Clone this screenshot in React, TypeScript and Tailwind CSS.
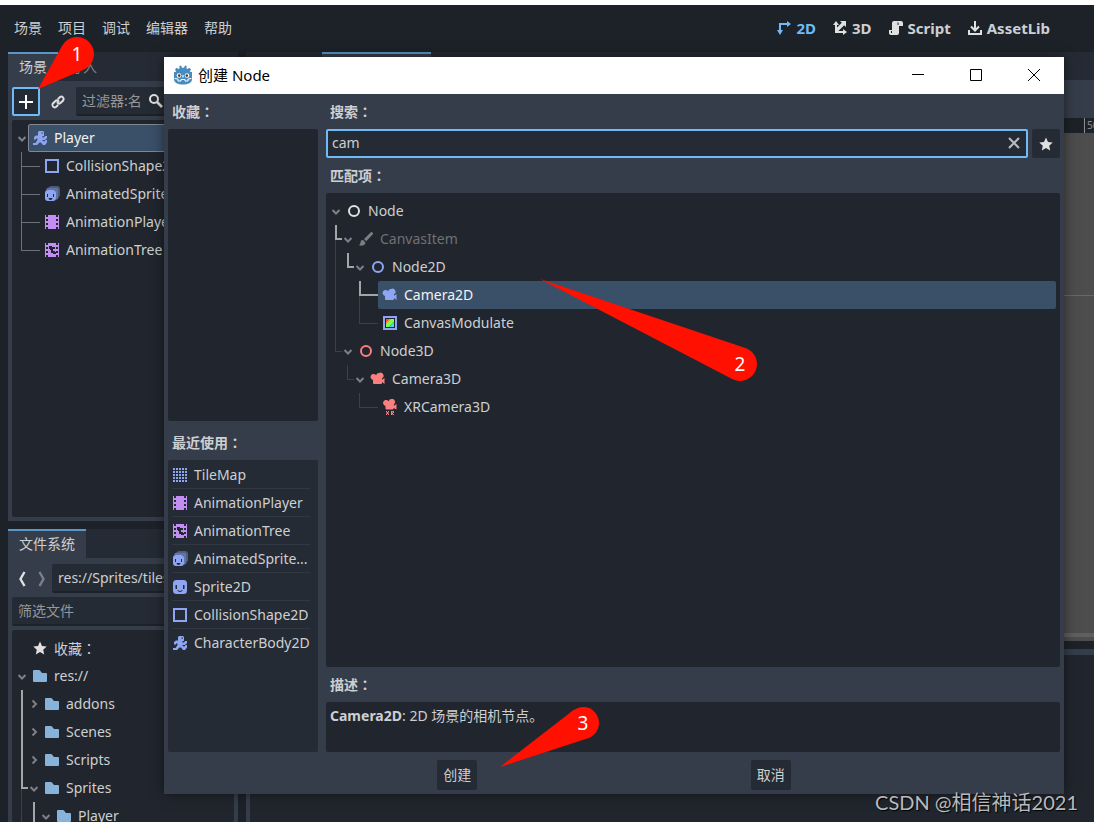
import type { ReactNode } from "react";
import clsx from "clsx";

type IconName =
  | "node"
  | "node2d"
  | "node3d"
  | "brush"
  | "camera2d"
  | "camera3d"
  | "xrcamera"
  | "modulate"
  | "tilemap"
  | "animPlayer"
  | "animTree"
  | "animSprite"
  | "sprite"
  | "collision"
  | "body"
  | "folder"
  | "star"
  | "plus"
  | "link"
  | "search"
  | "back"
  | "forward"
  | "clear"
  | "view2d"
  | "view3d"
  | "script"
  | "assetlib"
  | "arrowDown"
  | "arrowRight";

const BLUE = "#8da5f3";
const RED = "#fc7f7f";
const PURPLE = "#c38ef1";
const LIGHT = "#e0e0e0";

const CAMERA =
  "M9 2a3 3 0 0 0-2.900 2.300 3 3 0 1 0-3.100 4.600V12a1 1 0 0 0 1 1h7a1 1 0 0 0 1-1v-1l2.500 2V7l-2.500 1.700V7.300A3 3 0 0 0 9 2z";
const FILM =
  "M1 1v14h1v-2h2v2h8v-2h2v2h1V1h-1v2h-2V1H4v2H2V1zm1 4h2v2H2zm10 0h2v2h-2zM2 9h2v2H2zm10 0h2v2h-2z";

const icons: Record<IconName, ReactNode> = {
  node: <circle cx="8" cy="8" r="5" fill="none" stroke={LIGHT} strokeWidth="2" />,
  node2d: <circle cx="8" cy="8" r="5" fill="none" stroke={BLUE} strokeWidth="2" />,
  node3d: <circle cx="8" cy="8" r="5" fill="none" stroke={RED} strokeWidth="2" />,
  brush: (
    <path
      fill="#7b7d81"
      d="M14.600 1.400a1.400 1.400 0 0 0-2 0L6 8l2.200 2.200 6.400-6.800a1.400 1.400 0 0 0 0-2zM5 9a2.300 2.300 0 0 0-2.500 2.200c-.1 1.300-.8 2.300-1.500 3 2 .8 5 .6 6-1.200a2.300 2.300 0 0 0 .3-1.700z"
    />
  ),
  camera2d: <path fill={BLUE} d={CAMERA} />,
  camera3d: <path fill={RED} d={CAMERA} />,
  xrcamera: (
    <g fill={RED}>
      <path d="M9.500 0a3 3 0 0 0-2.900 2.300 3 3 0 1 0-3.100 4.600V9.500a1 1 0 0 0 1 1h6a1 1 0 0 0 1-1V9l3 1.500V5l-2.600 1.700V5.300A3 3 0 0 0 9.500 0z" />
      <path d="M4 12h1v1h1v-1h1v1.500H6v1h1V16H6v-1H5v1H4v-1.500h1v-1H4zM9 12h3v2h-1v1h1v1h-1l-1-1v1H9zm1 .8v.8h1v-.8z" />
    </g>
  ),
  modulate: (
    <>
      <path fill={BLUE} d="M1 1h14v14H1z" />
      <path fill="#21262e" d="M3 3h10v10H3z" />
      <path fill="#ff4545" d="M4 4h5L4 9z" />
      <path fill="#ffe345" d="M8 4h1L4 9V8z" />
      <path fill="#80ff45" d="M9 4h3v3l-5 5H4V9z" />
      <path fill="#45d7ff" d="M12 7v5H7z" />
    </>
  ),
  tilemap: (
    <path
      fill={BLUE}
      d="M1 1h2v2H1zm3 0h2v2H4zm3 0h2v2H7zm3 0h2v2h-2zm3 0h2v2h-2zM1 4h2v2H1zm3 0h2v2H4zm3 0h2v2H7zm3 0h2v2h-2zm3 0h2v2h-2zM1 7h2v2H1zm3 0h2v2H4zm3 0h2v2H7zm3 0h2v2h-2zm3 0h2v2h-2zM1 10h2v2H1zm3 0h2v2H4zm3 0h2v2H7zm3 0h2v2h-2zm3 0h2v2h-2zM1 13h2v2H1zm3 0h2v2H4zm3 0h2v2H7zm3 0h2v2h-2zm3 0h2v2h-2z"
    />
  ),
  animPlayer: <path fill={PURPLE} d={FILM} />,
  animTree: (
    <>
      <path fill={PURPLE} d={FILM} />
      <path fill="#21262e" d="M5 4h3v1h3v2H9v2h2v1h1v2h-3v-1H7V8H6V7H5z" />
    </>
  ),
  animSprite: (
    <>
      <path fill={BLUE} opacity=".4" d="M7 0h6a3 3 0 0 1 3 3v6a3 3 0 0 1-1.500 2.600V4A2.500 2.500 0 0 0 12 1.500H4.500A3 3 0 0 1 7 0z" />
      <path fill={BLUE} opacity=".6" d="M5 1.500h7A2.500 2.500 0 0 1 14.500 4v7A3 3 0 0 1 12 13.800V7a3 3 0 0 0-3-3H2A3 3 0 0 1 5 1.500z" />
      <rect x="1" y="4" width="11" height="11" rx="3" fill={BLUE} />
      <path fill="#252b34" d="M3 8h1v3H3zm6 0h1v3H9zM4.500 12h4a2 2 0 0 1-4 0z" />
    </>
  ),
  sprite: (
    <>
      <rect x="1" y="1" width="14" height="14" rx="3.500" fill={BLUE} />
      <path fill="#252b34" d="M3.500 6H5v4H3.500zM11 6h1.500v4H11z" />
      <path fill="none" stroke="#252b34" d="M5.500 11.500Q8 13.700 10.500 11.500" />
    </>
  ),
  collision: <path fill="none" stroke={BLUE} strokeWidth="2" d="M2 2h12v12H2z" />,
  body: (
    <path
      fill={BLUE}
      d="M7 1h4l1 1v4h-1.500v1.500H12L13 6h2v2l-2 2h-2.500v1l2 .5 1-1.500H15v2.500L13 15h-2l-2-2.500H7.500L5 15H1v-2h2.500l2-3V8.500H4v1H2V7l2-1.500h2V2zm2.500 1.500v1.300h1.300V2.500z"
    />
  ),
  folder: (
    <path fill="#87b3da" d="M2 2a1 1 0 0 0-1 1v10a1 1 0 0 0 1 1h12a1 1 0 0 0 1-1V6a1 1 0 0 0-1-1h-4L8 2.600A1.500 1.500 0 0 0 7 2z" />
  ),
  star: (
    <path fill={LIGHT} d="M8 1.500 6 6 1.300 6.500 4.800 9.700 3.800 14.500 8 12l4.200 2.500-1-4.800 3.500-3.200L10 6z" />
  ),
  plus: <path fill="#fff" d="M7 1h2v6h6v2H9v6H7V9H1V7h6z" />,
  link: (
    <g fill="none" stroke={LIGHT} strokeWidth="2" strokeLinecap="round">
      <path d="M8.300 4.700 10 3a2.400 2.400 0 0 1 3.300 3.300l-2.500 2.500a2.400 2.400 0 0 1-3.300 0" />
      <path d="M7.700 11.300 6 13a2.400 2.400 0 0 1-3.300-3.300l2.500-2.500a2.400 2.400 0 0 1 3.300 0" />
    </g>
  ),
  search: (
    <g fill="none" stroke={LIGHT} strokeWidth="2">
      <circle cx="6" cy="6" r="4" />
      <path strokeWidth="2.500" d="m9 9 5 5" />
    </g>
  ),
  back: <path fill="none" stroke={LIGHT} strokeWidth="2.400" d="M10.500 1 6.500 8l4 7" />,
  forward: <path fill="none" stroke="#7c8188" strokeWidth="2.400" d="m5.500 1 4 7-4 7" />,
  clear: <path fill="none" stroke="#b9bcc0" strokeWidth="2" d="m3 3 10 10M13 3 3 13" />,
  view2d: (
    <path fill="#70bafa" d="M11 1v2H3v7H1l3 5 3-5H5V5h6v2l4-3z" />
  ),
  view3d: (
    <path
      fill={LIGHT}
      d="M4 1 1 5h2v8h8v2l4-3-4-3v2H6.400l5.800-5.800L14 7V1H8l1.800 1.800L5 7.600V5h2z"
    />
  ),
  script: (
    <path fill={LIGHT} d="M6 1a2 2 0 0 0-2 2v7H1v2.500a2 2 0 0 0 2 2.500h6a2 2 0 0 0 2-2V6h4V3a2 2 0 0 0-2-2zm3.500 1.500h1V5h-1zM4 11v2H3v-2z" />
  ),
  assetlib: (
    <path
      fill="none"
      stroke={LIGHT}
      strokeWidth="2"
      d="M8 1v9M4 6.500l4 4 4-4M2 10v4h12v-4"
    />
  ),
  arrowDown: <path fill="none" stroke="#7c8188" strokeWidth="2" d="m4.500 7 3.500 3.500L11.500 7" />,
  arrowRight: <path fill="none" stroke="#7c8188" strokeWidth="2" d="M6.500 4.500 10 8l-3.500 3.500" />,
};

function Icon({ name, className = "size-4" }: { name: IconName; className?: string }) {
  return (
    <svg viewBox="0 0 16 16" className={clsx("shrink-0", className)} aria-hidden="true">
      {icons[name]}
    </svg>
  );
}

// Upper and lower half of one 12px guide column in a tree row
const upperGuides: Record<string, string> = {
  L: "border-l-2 border-b-2 border-[#a3a5a8]",
  V: "border-l-2 border-[#a3a5a8]",
  l: "border-l border-b border-[#3c4149]",
  v: "border-l border-[#3c4149]",
  s: "border-l border-b border-[#6c7078]",
  ".": "",
};

const lowerGuides: Record<string, string> = {
  V: "border-l-2 border-[#a3a5a8]",
  v: "border-l border-[#3c4149]",
  s: "border-l border-[#6c7078]",
  ".": "",
};

interface TreeItem {
  label: ReactNode;
  icon: IconName;
  guides?: string[]; // two letters each: upper half, lower half
  arrow?: "arrowDown" | "arrowRight";
  lead?: "L" | "l" | "s";
  selected?: boolean;
  outlined?: boolean;
  dim?: boolean;
}

const leadLines = {
  L: "border-b-2 border-[#a3a5a8]",
  l: "border-b border-[#3c4149]",
  s: "border-b border-[#6c7078]",
};

function Tree({ items }: { items: TreeItem[] }) {
  return (
    <ul>
      {items.map((item, i) => (
        <li key={i} className="flex h-7">
          {item.guides?.map((g, j) => (
            <span key={j} className="flex w-3 shrink-0 flex-col pl-[5px]">
              <span className={clsx("h-[15px]", upperGuides[g[0]])} />
              <span className={clsx("flex-1", lowerGuides[g[1]])} />
            </span>
          ))}
          <span className="flex h-7 w-3 shrink-0 items-center justify-center">
            {item.arrow && <Icon name={item.arrow} />}
            {item.lead && (
              <span className={clsx("h-[15px] w-3 self-start", leadLines[item.lead])} />
            )}
          </span>
          <span
            className={clsx(
              "flex flex-1 items-center gap-1.5 rounded-xs whitespace-nowrap",
              item.selected && "bg-[#3a5068] text-[#f2f2f2]",
              item.outlined ? "border border-[#7f8893] px-[3px]" : "px-1",
              item.dim && "text-[#6e7175]",
            )}
          >
            <Icon name={item.icon} />
            {item.label}
          </span>
        </li>
      ))}
    </ul>
  );
}

function Colon() {
  return <span className="font-['Noto_Sans_CJK_TC',sans-serif]">：</span>;
}

const sceneTree: TreeItem[] = [
  { label: "Player", icon: "body", arrow: "arrowDown", selected: true, outlined: true },
  { label: "CollisionShape2D", icon: "collision", guides: ["ss"], lead: "s" },
  { label: "AnimatedSprite2D", icon: "animSprite", guides: ["ss"], lead: "s" },
  { label: "AnimationPlayer", icon: "animPlayer", guides: ["ss"], lead: "s" },
  { label: "AnimationTree", icon: "animTree", guides: ["s."], lead: "s" },
];

const fileTree: TreeItem[] = [
  { label: <span>收藏<Colon /></span>, icon: "star" },
  { label: "res://", icon: "folder", arrow: "arrowDown" },
  { label: "addons", icon: "folder", guides: ["VV"], arrow: "arrowRight" },
  { label: "Scenes", icon: "folder", guides: ["VV"], arrow: "arrowRight" },
  { label: "Scripts", icon: "folder", guides: ["VV"], arrow: "arrowRight" },
  { label: "Sprites", icon: "folder", guides: ["Lv"], arrow: "arrowDown" },
  { label: "Player", icon: "folder", guides: ["vv", "VV"], arrow: "arrowDown" },
];

const matches: TreeItem[] = [
  { label: "Node", icon: "node", arrow: "arrowDown" },
  { label: "CanvasItem", icon: "brush", guides: ["Lv"], arrow: "arrowDown", dim: true },
  { label: "Node2D", icon: "node2d", guides: ["vv", "L."], arrow: "arrowDown" },
  { label: "Camera2D", icon: "camera2d", guides: ["vv", "..", "Lv"], lead: "L", selected: true },
  { label: "CanvasModulate", icon: "modulate", guides: ["vv", "..", "l."], lead: "l" },
  { label: "Node3D", icon: "node3d", guides: ["l."], arrow: "arrowDown" },
  { label: "Camera3D", icon: "camera3d", guides: ["..", "l."], arrow: "arrowDown" },
  { label: "XRCamera3D", icon: "xrcamera", guides: ["..", "..", "l."], lead: "l" },
];

const recent: { label: string; icon: IconName }[] = [
  { label: "TileMap", icon: "tilemap" },
  { label: "AnimationPlayer", icon: "animPlayer" },
  { label: "AnimationTree", icon: "animTree" },
  { label: "AnimatedSprite...", icon: "animSprite" },
  { label: "Sprite2D", icon: "sprite" },
  { label: "CollisionShape2D", icon: "collision" },
  { label: "CharacterBody2D", icon: "body" },
];

const workspaces: { label: string; icon: IconName; active?: boolean }[] = [
  { label: "2D", icon: "view2d", active: true },
  { label: "3D", icon: "view3d" },
  { label: "Script", icon: "script" },
  { label: "AssetLib", icon: "assetlib" },
];

function MenuBar() {
  return (
    <header className="flex h-[47px] shrink-0 items-center justify-between pr-11 pb-0.5 pl-3.5">
      <nav className="flex gap-4">
        {["场景", "项目", "调试", "编辑器", "帮助"].map((m) => (
          <button key={m}>{m}</button>
        ))}
      </nav>
      <div className="flex gap-4 text-[15px] font-bold">
        {workspaces.map((w) => (
          <button
            key={w.label}
            className={clsx("flex items-center gap-1", w.active && "text-[#70bafa]")}
          >
            <Icon name={w.icon} />
            {w.label}
          </button>
        ))}
      </div>
    </header>
  );
}

function SceneDock() {
  return (
    <section className="flex h-[469px] shrink-0 flex-col bg-[#363d4a]">
      <div className="flex h-[29px] shrink-0 bg-[#252b34]">
        <button className="border-t-2 border-[#5b96c9] bg-[#363d4a] px-[11px] pb-0.5">场景</button>
        <button className="px-[11px] text-[#7c8189]">导入</button>
      </div>
      <div className="flex flex-1 flex-col gap-1 p-1">
        <div className="flex h-[31px] items-end gap-1">
          <button
            aria-label="添加节点"
            className="flex h-[29px] w-7 items-center justify-center rounded-xs border-2 border-[#70bafa] bg-[#252b34]"
          >
            <Icon name="plus" />
          </button>
          <button aria-label="实例化场景" className="flex h-[29px] w-7 items-center justify-center">
            <Icon name="link" />
          </button>
          <label className="flex h-[29px] w-[94px] items-center rounded-xs border-b-2 border-[#1d2229] bg-[#252b34] px-1.5">
            <input
              aria-label="过滤器"
              placeholder="过滤器:名"
              className="w-[66px] outline-none placeholder:text-[#94979c]"
            />
            <Icon name="search" />
          </label>
        </div>
        <div className="flex-1 rounded-xs bg-[#21262e] p-1">
          <Tree items={sceneTree} />
        </div>
      </div>
    </section>
  );
}

function FileSystemDock() {
  return (
    <section className="flex min-h-0 flex-1 flex-col bg-[#363d4a]">
      <div className="flex h-[29px] shrink-0 bg-[#252b34]">
        <button className="border-t-2 border-[#5b96c9] bg-[#363d4a] px-[11px] pb-0.5">
          文件系统
        </button>
      </div>
      <div className="flex min-h-0 flex-1 flex-col gap-1 p-1 pb-0">
        <div className="flex h-[31px] items-end">
          <button aria-label="后退" className="flex h-[29px] w-5 items-center justify-center">
            <Icon name="back" />
          </button>
          <button aria-label="前进" className="flex h-[29px] w-5 items-center justify-center">
            <Icon name="forward" />
          </button>
          <input
            aria-label="路径"
            defaultValue="res://Sprites/tiles"
            className="h-[29px] min-w-0 flex-1 rounded-xs border-b-2 border-[#1d2229] bg-[#252b34] px-1.5 outline-none"
          />
        </div>
        <input
          aria-label="筛选文件"
          placeholder="筛选文件"
          className="h-[29px] rounded-xs border-b-2 border-[#1d2229] bg-[#252b34] px-1.5 outline-none placeholder:text-[#94979c]"
        />
        <div className="min-h-0 flex-1 overflow-hidden rounded-xs bg-[#21262e] p-1">
          <Tree items={fileTree} />
        </div>
      </div>
    </section>
  );
}

function Viewport() {
  return (
    <main className="flex min-w-0 flex-1 flex-col">
      <div className="flex h-7 shrink-0 bg-[#252b34]">
        <div className="ml-[76px] w-[109px] border-t-2 border-[#5b96c9] bg-[#363d4a]" />
      </div>
      <div className="h-[38px] shrink-0 bg-[#363d4a]" />
      <div className="flex h-[15px] shrink-0 justify-end bg-[#1d2229]">
        <span className="w-2.5 overflow-hidden border-l border-[#8b8d90] pl-0.5 text-[10px] leading-[15px] text-[#8b8d90]">
          50
        </span>
      </div>
      <div className="flex h-[508px] shrink-0 flex-col bg-[#4d4d4d]">
        <div className="h-[163px] border-b border-[#9b4593]" />
        <div className="mt-auto mb-1 h-1 bg-[#5f5f5f]" />
      </div>
      <div className="mt-2 min-h-0 flex-1 border-t-6 border-l-4 border-[#363d4a] bg-[#21262e]" />
    </main>
  );
}

function GodotLogo() {
  return (
    <svg viewBox="0 0 20 20" className="size-5" aria-hidden="true">
      <path
        fill="#478cbf"
        d="M8 .500 6.300 1 6.600 3.300 5.500 3.900 3.600 2.700 2 4.500 3 6.300 2.700 7H1v7.500C1 17.500 5 19.500 10 19.500s9-2 9-5V7h-1.700L17 6.300l1-1.800-1.600-1.800-1.900 1.200-1.100-.6.3-2.300L12 .500l-1 2.300H9z"
      />
      <circle cx="6" cy="10.500" r="2.300" fill="#fff" />
      <circle cx="14" cy="10.500" r="2.300" fill="#fff" />
      <circle cx="6.200" cy="10.600" r="1.300" fill="#414042" />
      <circle cx="13.800" cy="10.600" r="1.300" fill="#414042" />
      <path stroke="#fff" strokeWidth="1.200" d="M10 10v2.500" />
      <path fill="none" stroke="#fff" d="M1.500 13.500 5 14v2h3v-1.500h4V16h3v-2l3.500-.5" />
    </svg>
  );
}

function Caption({ children, htmlFor }: { children: ReactNode; htmlFor?: string }) {
  return (
    <label htmlFor={htmlFor} className="block h-[31px] shrink-0 pl-1 leading-[26px] font-bold">
      {children}
      <Colon />
    </label>
  );
}

function CreateNodeDialog() {
  return (
    <div
      role="dialog"
      aria-label="创建 Node"
      className="absolute top-[57px] right-[30px] bottom-7 left-[164px] flex flex-col bg-[#363d4a] shadow-[0_0_12px_rgba(0,0,0,0.5)]"
    >
      <div className="flex h-[37px] shrink-0 items-center bg-white pr-px pb-0.5 pl-[9px] text-[15px] text-black">
        <GodotLogo />
        <h1 className="flex-1 pl-[5px]">创建 Node</h1>
        <button aria-label="最小化" className="flex h-full w-[58px] items-center justify-center">
          <svg viewBox="0 0 12 12" className="size-3" stroke="#000">
            <path d="M0 5.500h12" />
          </svg>
        </button>
        <button aria-label="最大化" className="flex h-full w-[58px] items-center justify-center">
          <svg viewBox="0 0 12 12" className="size-3" stroke="#000" fill="none">
            <path d="M.5.5h11v11H.5z" />
          </svg>
        </button>
        <button aria-label="关闭" className="flex h-full w-[58px] items-center justify-center">
          <svg viewBox="0 0 12 12" className="size-3" stroke="#000">
            <path d="m0 0 12 12M12 0 0 12" />
          </svg>
        </button>
      </div>

      <div className="flex min-h-0 flex-1 flex-col p-1">
        <div className="flex min-h-0 flex-1 gap-2">
          <div className="flex w-[150px] shrink-0 flex-col gap-2">
            <section className="flex flex-1 flex-col">
              <Caption>收藏</Caption>
              <div className="flex-1 rounded-xs bg-[#21262e]" />
            </section>
            <section className="flex flex-1 flex-col">
              <Caption>最近使用</Caption>
              <ul className="flex-1 rounded-xs bg-[#252b34] py-px pr-2 pl-1">
                {recent.map((r) => (
                  <li
                    key={r.label}
                    className="flex h-7 items-center gap-1.5 border-b border-[#323842] whitespace-nowrap last:border-transparent"
                  >
                    <Icon name={r.icon} />
                    {r.label}
                  </li>
                ))}
              </ul>
            </section>
          </div>

          <div className="flex min-w-0 flex-1 flex-col gap-1">
            <section>
              <Caption htmlFor="search">搜索</Caption>
              <div className="flex gap-1">
                <div className="flex h-[29px] flex-1 items-center rounded-xs border-2 border-[#70bafa] bg-[#252b34] px-1 pb-0.5">
                  <input id="search" defaultValue="cam" className="min-w-0 flex-1 outline-none" />
                  <button aria-label="清除">
                    <Icon name="clear" />
                  </button>
                </div>
                <button
                  aria-label="收藏"
                  className="flex h-[29px] w-7 items-center justify-center rounded-xs bg-[#252b34]"
                >
                  <Icon name="star" />
                </button>
              </div>
            </section>
            <section className="flex min-h-0 flex-1 flex-col">
              <Caption>匹配项</Caption>
              <div className="flex-1 rounded-xs bg-[#21262e] p-1">
                <Tree items={matches} />
              </div>
            </section>
            <section>
              <Caption>描述</Caption>
              <p className="h-[50px] rounded-xs bg-[#21262e] px-1 leading-7">
                <b>Camera2D</b>: 2D 场景的相机节点。
              </p>
            </section>
          </div>
        </div>
        <div className="flex shrink-0 justify-evenly gap-1 pt-2">
          <button className="h-[30px] w-10 rounded-xs bg-[#252b34]">创建</button>
          <button className="h-[30px] w-10 rounded-xs bg-[#252b34]">取消</button>
        </div>
      </div>
    </div>
  );
}

interface PinProps {
  n: number;
  tip: [number, number];
  head: [number, number];
  r: number;
}

// Teardrop callout: two tangents from the tip to a round head
function Pin({ n, tip, head, r }: PinProps) {
  const dx = tip[0] - head[0];
  const dy = tip[1] - head[1];
  const base = Math.atan2(dy, dx);
  const spread = Math.acos(r / Math.hypot(dx, dy));
  const at = (a: number) => `${head[0] + r * Math.cos(a)} ${head[1] + r * Math.sin(a)}`;
  return (
    <g>
      <path
        fill="#ff1000"
        d={`M${tip[0]} ${tip[1]}L${at(base + spread)}A${r} ${r} 0 1 1 ${at(base - spread)}Z`}
      />
      <text x={head[0]} y={head[1] + 7} textAnchor="middle" fill="#fff" fontSize="19">
        {n}
      </text>
    </g>
  );
}

export default function App() {
  return (
    <div className="relative flex h-screen flex-col overflow-hidden border-t-[5px] border-white bg-[#1d2229] font-['Noto_Sans','Noto_Sans_CJK_SC',sans-serif] text-[14px] leading-5 text-[#cdcfd2]">
      <MenuBar />
      <div className="flex min-h-0 flex-1 gap-2 pl-2">
        <aside className="flex w-[230px] shrink-0 flex-col gap-2">
          <SceneDock />
          <FileSystemDock />
        </aside>
        <Viewport />
      </div>

      <div className="pointer-events-none absolute inset-0 -top-[5px]">
        <div className="pointer-events-auto">
          <CreateNodeDialog />
        </div>
        <svg className="absolute inset-0 size-full">
          <Pin n={1} tip={[38, 89]} head={[77, 54]} r={17} />
          <Pin n={2} tip={[540, 279]} head={[740, 364]} r={17} />
          <Pin n={3} tip={[500, 767]} head={[583, 723]} r={16} />
        </svg>
        <p className="absolute right-4 bottom-2 font-['Lato','Noto_Sans_CJK_SC',sans-serif] text-[20px] leading-6 text-[#b8babd] [text-shadow:1px_1px_1px_#000]">
          CSDN @相信神话2021
        </p>
      </div>
    </div>
  );
}
